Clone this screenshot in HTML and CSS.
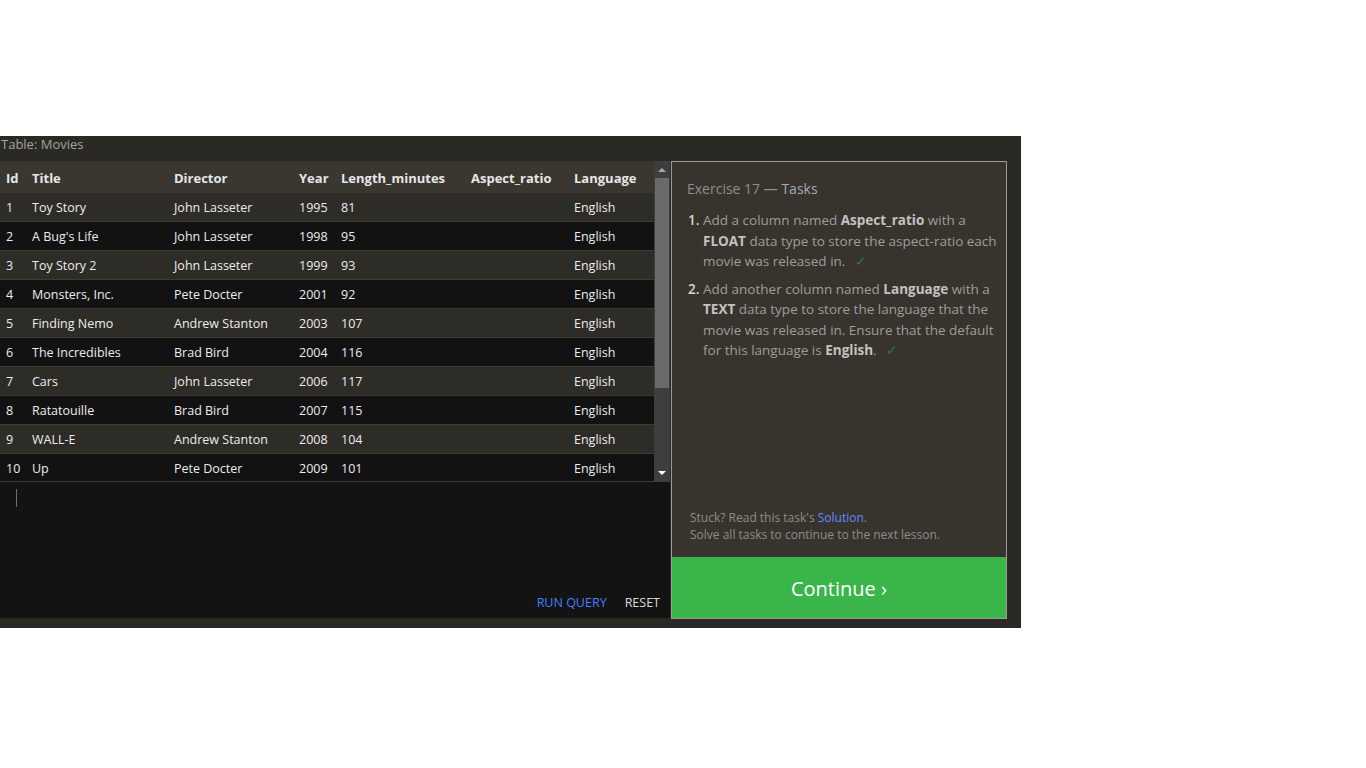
FILE: index.html
```html
<!DOCTYPE html>
<html>
<head>
<meta charset="utf-8">
<link rel="stylesheet" href="styles.css">
</head>
<body>
<div class="spacer"></div>
<div class="app">
  <div class="caption">Table: Movies</div>
  <div class="main">
    <div class="left">
      <div class="grid-wrap">
        <table class="grid">
          <colgroup>
            <col style="width:26px"><col style="width:142px"><col style="width:125px"><col style="width:42px"><col style="width:130px"><col style="width:103px"><col style="width:86px">
          </colgroup>
          <thead>
            <tr><th>Id</th><th>Title</th><th>Director</th><th>Year</th><th>Length_minutes</th><th>Aspect_ratio</th><th>Language</th></tr>
          </thead>
          <tbody>
            <tr><td>1</td><td>Toy Story</td><td>John Lasseter</td><td>1995</td><td>81</td><td></td><td>English</td></tr>
            <tr><td>2</td><td>A Bug's Life</td><td>John Lasseter</td><td>1998</td><td>95</td><td></td><td>English</td></tr>
            <tr><td>3</td><td>Toy Story 2</td><td>John Lasseter</td><td>1999</td><td>93</td><td></td><td>English</td></tr>
            <tr><td>4</td><td>Monsters, Inc.</td><td>Pete Docter</td><td>2001</td><td>92</td><td></td><td>English</td></tr>
            <tr><td>5</td><td>Finding Nemo</td><td>Andrew Stanton</td><td>2003</td><td>107</td><td></td><td>English</td></tr>
            <tr><td>6</td><td>The Incredibles</td><td>Brad Bird</td><td>2004</td><td>116</td><td></td><td>English</td></tr>
            <tr><td>7</td><td>Cars</td><td>John Lasseter</td><td>2006</td><td>117</td><td></td><td>English</td></tr>
            <tr><td>8</td><td>Ratatouille</td><td>Brad Bird</td><td>2007</td><td>115</td><td></td><td>English</td></tr>
            <tr><td>9</td><td>WALL-E</td><td>Andrew Stanton</td><td>2008</td><td>104</td><td></td><td>English</td></tr>
            <tr><td>10</td><td>Up</td><td>Pete Docter</td><td>2009</td><td>101</td><td></td><td>English</td></tr>
          </tbody>
        </table>
        <div class="scrollbar">
          <div class="arrow up"></div>
          <div class="track"><div class="thumb"></div></div>
          <div class="arrow down"></div>
        </div>
      </div>
      <div class="editor">
        <div class="cursor"></div>
        <div class="actions">
          <span class="run">RUN QUERY</span>
          <span class="reset">RESET</span>
        </div>
      </div>
    </div>
    <div class="panel">
      <div class="panel-body">
        <div class="title">Exercise 17 — <span class="tasks">Tasks</span></div>
        <ol class="task-list">
          <li>Add a column named <b>Aspect_ratio</b> with a <b>FLOAT</b> data type to store the aspect-ratio each movie was released in. <span class="check">✓</span></li>
          <li>Add another column named <b>Language</b> with a <b>TEXT</b> data type to store the language that the movie was released in. Ensure that the default for this language is <b>English</b>. <span class="check">✓</span></li>
        </ol>
        <div class="help">
          <div>Stuck? Read this task's <span class="link">Solution</span>.</div>
          <div>Solve all tasks to continue to the next lesson.</div>
        </div>
      </div>
      <div class="continue">Continue ›</div>
    </div>
  </div>
</div>
</body>
</html>
```

FILE: styles.css
```css
html, body {
  margin: 0;
  padding: 0;
  background: #ffffff;
  font-family: "Open Sans", "Noto Sans", sans-serif;
}

.spacer {
  height: 136px;
}

.app {
  width: 1021px;
  height: 492px;
  background: #2b2924;
  box-sizing: border-box;
}

.caption {
  height: 25px;
  line-height: 17px;
  font-size: 13px;
  color: #a3a3a3;
  padding-left: 1px;
}

.main {
  display: flex;
  gap: 1px;
}

.left {
  width: 670px;
  display: flex;
  flex-direction: column;
}

.grid-wrap {
  display: flex;
  height: 320px;
  overflow: hidden;
  border-bottom: 1px solid #3c3c3c;
}

.grid {
  width: 654px;
  table-layout: fixed;
  border-collapse: separate;
  border-spacing: 0;
  font-size: 12.5px;
  color: #ececec;
  align-self: flex-start;
}

.grid th {
  height: 30px;
  padding: 2px 0 0 6px;
  text-align: left;
  font-weight: 700;
  font-size: 13px;
  background: #3a3731;
  color: #e6e6e6;
  white-space: nowrap;
  vertical-align: middle;
}

.grid td {
  height: 28px;
  padding: 0 0 0 6px;
  white-space: nowrap;
  border-bottom: 1px solid #3a3a36;
  vertical-align: middle;
}

.grid tbody tr:last-child td {
  border-bottom: none;
}

.grid tbody tr:nth-child(odd) td {
  background: #2e2c27;
}

.grid tbody tr:nth-child(even) td {
  background: #121212;
}

.scrollbar {
  width: 16px;
  background: #3e3e3e;
  display: flex;
  flex-direction: column;
  align-items: center;
}

.arrow {
  height: 17px;
  width: 16px;
  display: flex;
  align-items: center;
  justify-content: center;
}

.arrow.up::before {
  content: "";
  border-left: 4px solid transparent;
  border-right: 4px solid transparent;
  border-bottom: 4px solid #a8a8a8;
}

.arrow.down::before {
  content: "";
  border-left: 4px solid transparent;
  border-right: 4px solid transparent;
  border-top: 4px solid #ffffff;
}

.track {
  flex: 1;
  width: 16px;
  display: flex;
  justify-content: center;
}

.thumb {
  width: 14px;
  height: 210px;
  background: #6a6a6a;
}

.editor {
  height: 136px;
  background: #131313;
  box-sizing: border-box;
  display: flex;
  flex-direction: column;
  justify-content: space-between;
  padding: 7px 10px 7px 16px;
}

.cursor {
  width: 1px;
  height: 18px;
  background: #6e6e6e;
}

.actions {
  display: flex;
  justify-content: flex-end;
  gap: 18px;
  font-size: 12.5px;
}

.run {
  color: #4d7dff;
}

.reset {
  color: #d8d8d8;
}

.panel {
  width: 336px;
  height: 458px;
  box-sizing: border-box;
  border: 1px solid #9b9b9b;
  background: #38342d;
  display: flex;
  flex-direction: column;
}

.panel-body {
  flex: 1;
  display: flex;
  flex-direction: column;
  padding: 17px 5px 0 15px;
}

.title {
  font-size: 14px;
  color: #8f8f8f;
  line-height: 20px;
}

.tasks {
  color: #a3abb6;
}

.task-list {
  margin: 11px 0 0 0;
  padding: 0 0 0 16px;
  font-size: 13.5px;
  line-height: 20.5px;
  color: #9d9d9d;
}

.task-list li {
  margin-bottom: 7px;
}

.task-list li::marker {
  color: #d6d6d6;
  font-weight: 600;
}

.task-list b {
  color: #c2c2c2;
}

.check {
  color: #2e7a32;
  margin-left: 6px;
}

.help {
  margin-top: auto;
  padding: 0 0 14px 3px;
  font-size: 12px;
  line-height: 17px;
  color: #8c8c8c;
}

.link {
  color: #5e8bff;
}

.continue {
  height: 61px;
  background: #39b54a;
  color: #ffffff;
  font-size: 20px;
  display: flex;
  align-items: center;
  justify-content: center;
  padding-top: 1px;
  box-sizing: border-box;
}
```
